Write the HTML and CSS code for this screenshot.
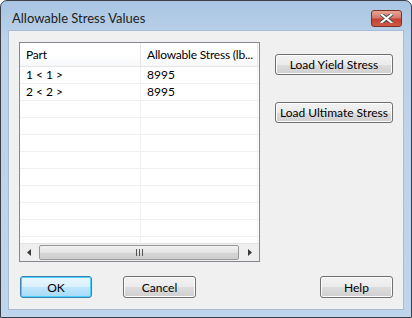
FILE: index.html
```html
<!DOCTYPE html>
<html lang="en">
<head>
  <meta charset="UTF-8" />
  <title>Allowable Stress Values</title>
  <link rel="stylesheet" href="styles.css">
</head>
<body>

<div class="window">
  <div class="titlebar">
    <span class="title">Allowable Stress Values</span>
    <button class="close" title="Close">
      <svg width="13" height="9" viewBox="0 0 13 9">
        <path d="M1.5 0.5 L11.5 8.5 M11.5 0.5 L1.5 8.5" stroke="#4a4a4a" stroke-width="4" stroke-linecap="square"/>
        <path d="M1.5 0.5 L11.5 8.5 M11.5 0.5 L1.5 8.5" stroke="#fff" stroke-width="2" stroke-linecap="square"/>
      </svg>
    </button>
  </div>

  <div class="client">
    <div class="top-row">
      <div class="listview">
        <div class="lv-header">
          <div class="cell c1">Part</div>
          <div class="cell c2">Allowable Stress (lb...</div>
        </div>
        <div class="lv-body">
          <div class="lv-row"><div class="cell c1">1 &lt; 1 &gt;</div><div class="cell c2">8995</div></div>
          <div class="lv-row"><div class="cell c1">2 &lt; 2 &gt;</div><div class="cell c2">8995</div></div>
          <div class="lv-row"><div class="cell c1"></div><div class="cell c2"></div></div>
          <div class="lv-row"><div class="cell c1"></div><div class="cell c2"></div></div>
          <div class="lv-row"><div class="cell c1"></div><div class="cell c2"></div></div>
          <div class="lv-row"><div class="cell c1"></div><div class="cell c2"></div></div>
          <div class="lv-row"><div class="cell c1"></div><div class="cell c2"></div></div>
          <div class="lv-row"><div class="cell c1"></div><div class="cell c2"></div></div>
          <div class="lv-row"><div class="cell c1"></div><div class="cell c2"></div></div>
          <div class="lv-row"><div class="cell c1"></div><div class="cell c2"></div></div>
          <div class="lv-row"><div class="cell c1"></div><div class="cell c2"></div></div>
        </div>
        <div class="hscroll">
          <div class="arrow">
            <svg width="4" height="7" viewBox="0 0 4 7"><path d="M4 0 L0 3.5 L4 7 Z" fill="#3b3b3b"/></svg>
          </div>
          <div class="thumb"><span class="grip"></span></div>
          <div class="arrow">
            <svg width="4" height="7" viewBox="0 0 4 7"><path d="M0 0 L4 3.5 L0 7 Z" fill="#3b3b3b"/></svg>
          </div>
        </div>
      </div>

      <div class="side">
        <button class="btn wide">Load Yield Stress</button>
        <button class="btn wide">Load Ultimate Stress</button>
      </div>
    </div>

    <div class="bottom-row">
      <button class="btn default">OK</button>
      <button class="btn">Cancel</button>
      <span class="spacer"></span>
      <button class="btn">Help</button>
    </div>
  </div>
</div>

</body>
</html>
```

FILE: styles.css
```css
body {
  margin: 0;
  background: #ffffff;
  font-family: Lato, "Liberation Sans", sans-serif;
  font-size: 12px;
  color: #000;
}

.window {
  width: 410px;
  height: 316px;
  border: 1px solid #3a3f48;
  border-radius: 7px 7px 0 0;
  background: linear-gradient(#a9c5e2, #bcd3ea 40px, #bfd5ec);
  display: flex;
  flex-direction: column;
  overflow: hidden;
}

.titlebar {
  height: 29px;
  display: flex;
  align-items: flex-start;
  padding: 0 9px 0 11px;
}

.title {
  flex: 1;
  margin-top: 9px;
  font-size: 13px;
  color: #1c1c1c;
}

.close {
  margin-top: 9px;
  width: 31px;
  height: 17px;
  padding: 0;
  border: 1px solid #7b3026;
  border-radius: 3px;
  background: linear-gradient(#e8a696, #d6776a 45%, #c4412f 55%, #cf5a45);
  display: flex;
  align-items: center;
  justify-content: center;
}

.client {
  margin: 0 7px 7px 7px;
  flex: 1;
  background: #f0f0f0;
  border: 1px solid #a7bdd5;
  padding: 11px 10px 0 10px;
}

.top-row {
  display: flex;
}

.listview {
  width: 239px;
  height: 218px;
  border: 1px solid #828790;
  background: #fff;
  display: flex;
  flex-direction: column;
  overflow: hidden;
}

.lv-header, .lv-row {
  display: flex;
  flex: none;
}

.lv-header {
  height: 23px;
  background: linear-gradient(#ffffff, #ffffff 50%, #f7f8fa);
  border-bottom: 1px solid #e5e5e5;
}

.lv-header .cell {
  line-height: 23px;
  letter-spacing: -0.2px;
  border-right: 1px solid #e5e5e5;
}

.lv-body {
  flex: 1;
  overflow: hidden;
}

.lv-row {
  height: 16px;
  border-bottom: 1px solid #f0f0f0;
}

.lv-row .cell {
  line-height: 16px;
  border-right: 1px solid #f0f0f0;
}

.cell {
  padding-left: 6px;
  white-space: nowrap;
  overflow: hidden;
}

.c1 {
  width: 114px;
}

.c2 {
  width: 110px;
  flex: none;
}

.hscroll {
  height: 17px;
  flex: none;
  display: flex;
  background: #efefef;
  border-top: 1px solid #e3e3e3;
}

.arrow {
  width: 18px;
  display: flex;
  align-items: center;
  justify-content: center;
}

.thumb {
  flex: 1;
  margin: 1px 2px 1px 1px;
  border: 1px solid #979797;
  border-radius: 2px;
  background: linear-gradient(#f2f2f2, #e3e3e3 50%, #d4d4d4 51%, #cfcfcf);
  display: flex;
  align-items: center;
  justify-content: center;
}

.grip {
  width: 7px;
  height: 7px;
  background: repeating-linear-gradient(90deg, #555 0 1px, transparent 1px 3px);
}

.side {
  margin-left: 15px;
  padding-top: 12px;
  display: flex;
  flex-direction: column;
  gap: 27px;
}

.btn {
  font-family: inherit;
  font-size: 12px;
  height: 22px;
  width: 73px;
  padding: 0;
  color: #000;
  white-space: nowrap;
  border: 1px solid #707070;
  border-radius: 3px;
  background: linear-gradient(#f2f2f2, #ebebeb 50%, #dddddd 51%, #cfcfcf);
  box-shadow: inset 0 0 0 1px #fcfcfc;
}

.btn.wide {
  width: 118px;
  height: 21px;
}

.btn.default {
  width: 72px;
  border-color: #3c7fb1;
  background: linear-gradient(#eaf6fd, #d9f0fc 50%, #bee6fd 51%, #a7d9f5);
  box-shadow: inset 0 0 0 1px #48d1fc;
}

.bottom-row {
  margin-top: 14px;
  padding-left: 1px;
  display: flex;
  gap: 31px;
}

.spacer {
  flex: 1;
}
```
